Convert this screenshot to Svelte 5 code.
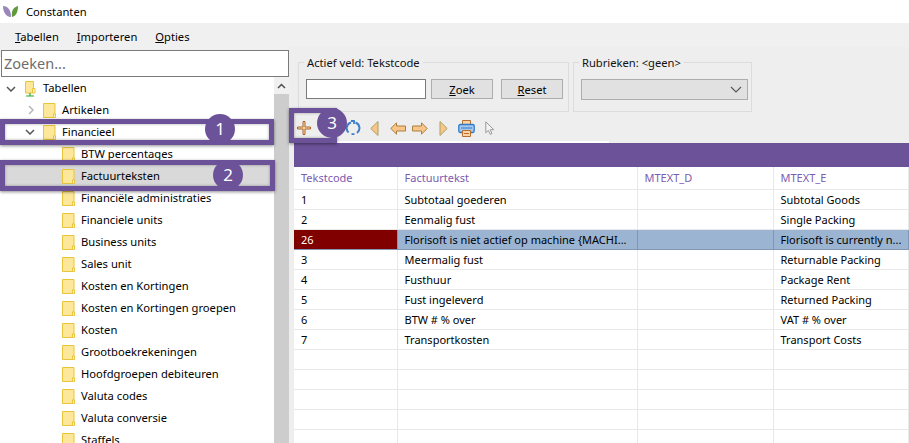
<script>
  // tree rows: level, label, chevron state
  const tree = [
    { level: 1, label: 'Artikelen', chevron: 'closed' },
    { level: 1, label: 'Financieel', chevron: 'open' },
    { level: 2, label: 'BTW percentages' },
    { level: 2, label: 'Factuurteksten', selected: true },
    { level: 2, label: 'Financiële administraties' },
    { level: 2, label: 'Financiele units' },
    { level: 2, label: 'Business units' },
    { level: 2, label: 'Sales unit' },
    { level: 2, label: 'Kosten en Kortingen' },
    { level: 2, label: 'Kosten en Kortingen groepen' },
    { level: 2, label: 'Kosten' },
    { level: 2, label: 'Grootboekrekeningen' },
    { level: 2, label: 'Hoofdgroepen debiteuren' },
    { level: 2, label: 'Valuta codes' },
    { level: 2, label: 'Valuta conversie' },
    { level: 2, label: 'Staffels' }
  ];

  const columns = ['Tekstcode', 'Factuurtekst', 'MTEXT_D', 'MTEXT_E'];

  const rows = [
    ['1', 'Subtotaal goederen', '', 'Subtotal Goods'],
    ['2', 'Eenmalig fust', '', 'Single Packing'],
    ['26', 'Florisoft is niet actief op machine {MACHI...', '', 'Florisoft is currently n...'],
    ['3', 'Meermalig fust', '', 'Returnable Packing'],
    ['4', 'Fusthuur', '', 'Package Rent'],
    ['5', 'Fust ingeleverd', '', 'Returned Packing'],
    ['6', 'BTW # % over', '', 'VAT # % over'],
    ['7', 'Transportkosten', '', 'Transport Costs'],
    ['', '', '', ''],
    ['', '', '', ''],
    ['', '', '', ''],
    ['', '', '', ''],
    ['', '', '', '']
  ];
</script>

{#snippet folder()}
  <svg class="folder" width="13" height="15" viewBox="0 0 13 15">
    <path d="M.5.5h11.5v10.5h-1.5v3.5H.5z" fill="#fde79a" stroke="#e9c53c" />
    <path d="M10.5 11h2v3.5h-2z" fill="#fff6d0" stroke="#e9c53c" />
  </svg>
{/snippet}

<div class="app">
  <header class="titlebar">
    <svg width="18" height="14" viewBox="0 0 18 14">
      <path d="M1 1c5 0 8 4 8 11C4 12 1 7 1 1z" fill="#9a86b8" />
      <path d="M16 1c-4 1-7 4-6 11 4-1 6-5 6-11z" fill="#5f9a3c" />
    </svg>
    <span>Constanten</span>
  </header>

  <nav class="menubar">
    <span><u>T</u>abellen</span>
    <span><u>I</u>mporteren</span>
    <span><u>O</u>pties</span>
  </nav>

  <div class="content">
    <aside class="sidebar">
      <div class="search">Zoeken...</div>
      <div class="tree-wrap">
        <div class="tree">
          <div class="node root">
            <svg class="chev" width="10" height="6" viewBox="0 0 10 6"><path d="M1 1l4 4 4-4" fill="none" stroke="#555" stroke-width="1.5" /></svg>
            <svg class="root-icon" width="11" height="16" viewBox="0 0 11 16">
              <path d="M.5.5h8v9.5h-1v2h-7z" fill="#fde79a" stroke="#e9c53c" />
              <path d="M7.5 7.5h2.5v4.5h-2.5z" fill="#fff6d0" stroke="#e9c53c" />
              <path d="M5 12v3M1 15h8" stroke="#2fa52f" stroke-width="1.2" />
            </svg>
            <span>Tabellen</span>
          </div>
          {#each tree as item}
            <div class="node level{item.level}" class:selected={item.selected}>
              {#if item.chevron === 'open'}
                <svg class="chev" width="10" height="6" viewBox="0 0 10 6"><path d="M1 1l4 4 4-4" fill="none" stroke="#555" stroke-width="1.5" /></svg>
              {:else if item.chevron === 'closed'}
                <svg class="chev closed" width="6" height="10" viewBox="0 0 6 10"><path d="M1 1l4 4-4 4" fill="none" stroke="#b5b5b5" stroke-width="1.5" /></svg>
              {/if}
              {@render folder()}
              <span>{item.label}</span>
            </div>
          {/each}
        </div>
        <div class="scrollbar">
          <div class="scroll-up">
            <svg width="9" height="6" viewBox="0 0 9 6"><path d="M1 5l3.5-3.5L8 5" fill="none" stroke="#505050" stroke-width="1.5" /></svg>
          </div>
          <div class="scroll-thumb"></div>
        </div>
      </div>
    </aside>

    <main class="main">
      <div class="filters">
        <fieldset class="group active">
          <legend>Actief veld: Tekstcode</legend>
          <div class="field-row">
            <div class="input"></div>
            <button class="btn"><u>Z</u>oek</button>
            <button class="btn reset"><u>R</u>eset</button>
          </div>
        </fieldset>
        <fieldset class="group rubrieken">
          <legend>Rubrieken: &lt;geen&gt;</legend>
          <div class="select">
            <svg width="12" height="7" viewBox="0 0 12 7"><path d="M1 1l5 5 5-5" fill="none" stroke="#555" stroke-width="1.1" /></svg>
          </div>
        </fieldset>
      </div>

      <div class="toolbar">
        <svg class="t-plus" width="16" height="16" viewBox="0 0 16 16">
          <path d="M7 1.500h2v5.500h5.500v2H9v5.500H7V9H1.500V7H7z" fill="#fbd3a5" stroke="#a9682a" />
        </svg>
        <svg class="t-refresh" width="16" height="16" viewBox="0 0 16 16">
          <path d="M6 2.500A6 6 0 0 0 3.500 12.500M10.500 2.500a6 6 0 0 1 1.500 10.500" fill="none" stroke="#3f7fc8" stroke-width="2" />
          <path d="M9.500 14.200h-3M6 1h3v3" fill="none" stroke="#3f7fc8" stroke-width="1.800" />
        </svg>
        <svg class="t-first" width="9" height="15" viewBox="0 0 9 15">
          <path d="M8 .5v14L.8 7.500z" fill="#f9c58b" stroke="#a9a25e" />
        </svg>
        <svg class="t-left" width="16" height="13" viewBox="0 0 16 13">
          <path d="M.8 6.500L6.500.8v3.200h9v5h-9v3.200z" fill="#f9c58b" stroke="#a9803e" />
        </svg>
        <svg class="t-right" width="16" height="13" viewBox="0 0 16 13">
          <path d="M15.200 6.500L9.500.8v3.200h-9v5h9v3.200z" fill="#f9c58b" stroke="#a9803e" />
        </svg>
        <svg class="t-last" width="9" height="15" viewBox="0 0 9 15">
          <path d="M1 .5v14l7.200-7z" fill="#f9c58b" stroke="#a9a25e" />
        </svg>
        <svg class="t-print" width="17" height="17" viewBox="0 0 17 17">
          <path d="M4.500.5h8v5h-8z" fill="#fbd3a5" stroke="#b5702d" />
          <rect x=".8" y="4.500" width="15.400" height="8" rx="1.500" fill="#a5c8ee" stroke="#2f79c9" stroke-width="1.300" />
          <path d="M3 8h11" stroke="#2f79c9" />
          <path d="M4.500 10.500h8v6h-8z" fill="#fbd3a5" stroke="#b5702d" />
          <path d="M6 13.500h5" stroke="#b5702d" />
        </svg>
        <svg class="t-cursor" width="10" height="14" viewBox="0 0 10 14">
          <path d="M.8.8v11l2.600-2.400 1.800 4 1.800-.8-1.800-3.900h3.600z" fill="#f4f4f4" stroke="#9a9a9a" />
        </svg>
      </div>

      <div class="strip"></div>
      <div class="band"></div>

      <table class="grid">
        <colgroup>
          <col style="width: 103px" />
          <col style="width: 240px" />
          <col style="width: 136px" />
          <col />
        </colgroup>
        <thead>
          <tr>
            {#each columns as col}
              <th>{col}</th>
            {/each}
          </tr>
        </thead>
        <tbody>
          {#each rows as row}
            <tr class:current={row[0] === '26'}>
              {#each row as cell}
                <td>{cell}</td>
              {/each}
            </tr>
          {/each}
        </tbody>
      </table>
    </main>
  </div>

  <!-- tutorial callouts painted over the screenshot -->
  <div class="mark mark1"></div>
  <div class="mark mark2"></div>
  <div class="mark mark3"></div>
  <div class="badge badge1">1</div>
  <div class="badge badge2">2</div>
  <div class="badge badge3">3</div>
</div>

<style>
  :global(body) {
    margin: 0;
  }

  .app {
    position: relative;
    width: 909px;
    height: 443px;
    overflow: hidden;
    background: #fff;
    color: #000;
    font-family: "Noto Sans", "Open Sans", sans-serif;
    font-size: 11.200px;
    display: flex;
    flex-direction: column;
  }

  .titlebar {
    height: 23px;
    flex: none;
    display: flex;
    align-items: center;
    gap: 6px;
    padding-left: 2px;
    background: #fff;
  }

  .menubar {
    height: 27px;
    flex: none;
    display: flex;
    align-items: center;
    gap: 18px;
    padding-left: 15px;
    background: #f0f0f0;
  }

  .content {
    flex: 1;
    display: flex;
    min-height: 0;
    margin-top: -3px;
  }

  .sidebar {
    width: 289px;
    flex: none;
    display: flex;
    flex-direction: column;
    padding-top: 3px;
    background: linear-gradient(#f0f0f0 10px, #fff 10px);
    position: relative;
    z-index: 1;
  }

  .search {
    height: 25px;
    margin-left: 1px;
    border: 1px solid #7a7a7a;
    background: #fff;
    color: #6d6d6d;
    font-size: 14.500px;
    line-height: 25px;
    padding-left: 2px;
    flex: none;
  }

  .tree-wrap {
    flex: 1;
    display: flex;
    min-height: 0;
  }

  .tree {
    flex: 1;
    overflow: hidden;
  }

  .node {
    height: 22px;
    display: flex;
    align-items: center;
    position: relative;
  }

  .node span {
    position: relative;
    top: -0.500px;
  }

  .node.root {
    padding-left: 25px;
  }

  .node.root span {
    margin-left: 7px;
  }

  .root-icon {
    margin-top: 1px;
  }

  .node.root .chev {
    position: absolute;
    left: 6px;
    top: 9px;
  }

  .level1 {
    padding-left: 43px;
  }

  .level1 .chev {
    position: absolute;
    left: 25px;
    top: 8px;
  }

  .level1 .chev.closed {
    left: 28px;
    top: 6px;
  }

  .level2 {
    padding-left: 62px;
  }

  .folder {
    margin-right: 6px;
    flex: none;
  }

  .selected {
    background: #d9d9d9;
  }

  .scrollbar {
    width: 15px;
    flex: none;
    display: flex;
    flex-direction: column;
    background: #f0f0f0;
  }

  .scroll-up {
    height: 17px;
    display: flex;
    align-items: center;
    justify-content: center;
  }

  .scroll-thumb {
    flex: 1;
    background: #cdcdcd;
  }

  .main {
    flex: 1;
    min-width: 0;
    background: #eee;
    display: flex;
    flex-direction: column;
    padding-left: 5px;
  }

  .filters {
    height: 68px;
    flex: none;
    display: flex;
    gap: 4px;
    padding-left: 4px;
    padding-top: 8px;
    box-sizing: border-box;
  }

  .group {
    margin: 0;
    min-width: 0;
    box-sizing: border-box;
    height: 57px;
    padding: 10px 0 0 7px;
    border: 1px solid #dcdcdc;
  }

  .group legend {
    padding: 0 3px;
    margin-left: -2px;
    line-height: 14px;
    color: #111;
    position: relative;
    top: 1px;
  }

  .active {
    width: 271px;
  }

  .rubrieken {
    width: 179px;
  }

  .field-row {
    display: flex;
    gap: 5px;
  }

  .input {
    width: 120px;
    height: 20px;
    box-sizing: border-box;
    border: 1px solid #7a7a7a;
    background: #fff;
  }

  .btn {
    width: 62px;
    height: 20px;
    padding: 0;
    border: 1px solid #adadad;
    background: #e1e1e1;
    font: inherit;
    color: #000;
  }

  .reset {
    margin-left: 3px;
  }

  .select {
    width: 167px;
    height: 21px;
    box-sizing: border-box;
    border: 1px solid #adadad;
    background: #e1e1e1;
    display: flex;
    align-items: center;
    justify-content: flex-end;
    padding-right: 5px;
  }

  .toolbar {
    height: 26px;
    flex: none;
    display: flex;
    align-items: center;
    padding-left: 2px;
  }

  .t-refresh {
    margin-left: 33px;
  }

  .t-first {
    margin-left: 9px;
  }

  .t-left {
    margin-left: 11px;
  }

  .t-right {
    margin-left: 6px;
  }

  .t-last {
    margin-left: 11px;
  }

  .t-print {
    margin-left: 10px;
  }

  .t-cursor {
    margin-left: 10px;
  }

  .strip {
    width: 315px;
    height: 2px;
    flex: none;
    background: #fff;
  }

  .band {
    height: 24px;
    flex: none;
    background: #6b5299;
  }

  .grid {
    width: 615px;
    table-layout: fixed;
    border-collapse: collapse;
    background: #fff;
  }

  .grid th,
  .grid td {
    height: 20px;
    padding: 0 0 0 7px;
    box-sizing: border-box;
    border-right: 1px solid #e8e8e8;
    border-bottom: 1px solid #e8e8e8;
    text-align: left;
    font-weight: 400;
    font-size: 11px;
    white-space: nowrap;
    overflow: hidden;
  }

  .grid th {
    height: 22px;
    color: #7c5bb0;
  }

  .current td {
    background: #9ab4d2;
    border-top: 1px solid #7f97b5;
    border-bottom-color: #7f97b5;
    border-right-color: #7f97b5;
  }

  .current td:first-child {
    background: #800000;
    color: #fff;
  }

  .mark {
    position: absolute;
    box-sizing: border-box;
    border: 5px solid #6b5299;
    box-shadow: 0 1px 3px rgba(0, 0, 0, 0.45), inset 0 0 3px rgba(0, 0, 0, 0.35);
    z-index: 2;
  }

  .mark1 {
    left: 0;
    top: 119px;
    width: 274px;
    height: 26px;
  }

  .mark2 {
    left: 0;
    top: 160px;
    width: 275px;
    height: 31px;
  }

  .mark3 {
    left: 289px;
    top: 108px;
    width: 48px;
    height: 35px;
  }

  .badge {
    position: absolute;
    width: 30px;
    height: 30px;
    border-radius: 50%;
    background: #6b5299;
    color: #fff;
    font-size: 17px;
    line-height: 30px;
    text-align: center;
    z-index: 3;
  }

  .badge1 {
    left: 205px;
    top: 114px;
  }

  .badge2 {
    left: 213px;
    top: 160px;
  }

  .badge3 {
    left: 317px;
    top: 108px;
  }
</style>
